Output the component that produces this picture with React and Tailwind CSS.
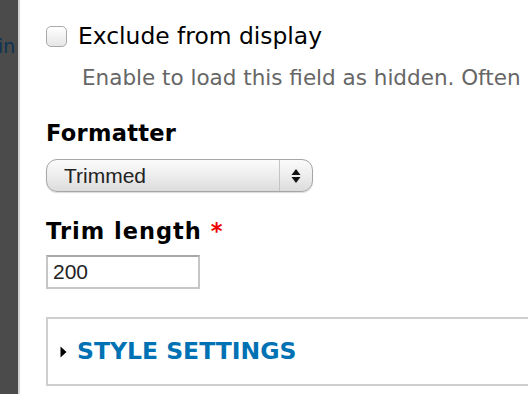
export default function App() {
  return (
    <div className="flex h-[394px] w-[528px] overflow-hidden bg-white font-['DejaVu_Sans',sans-serif]">
      {/* barra lateral escura */}
      <div className="relative w-[18px] shrink-0 overflow-hidden bg-[#4b4b4b]">
        <span className="absolute left-[-2px] top-[32px] text-[19px] text-[#0f3352]">in</span>
      </div>
      <div className="w-[2px] shrink-0 bg-[#d2d2d2]" />

      <div className="min-w-0 flex-1 pl-[26px] pt-[26px]">
        {/* Exclude from display */}
        <div className="flex items-center gap-[11px] whitespace-nowrap">
          <div className="h-[21px] w-[21px] shrink-0 rounded-[5px] border border-[#a9a9a9] bg-gradient-to-b from-white to-[#e6e6e6] shadow-[inset_0_1px_0_#fff]" />
          <span className="text-[23.4px] leading-[21px] text-black">Exclude from display</span>
        </div>
        <p className="mt-[21px] whitespace-nowrap pl-[36px] text-[21.5px] leading-[20px] text-[#666]">
          Enable to load this field as hidden. Often used to provide data for templates.
        </p>

        {/* Formatter */}
        <h3 className="mt-[33px] text-[22.5px] font-bold leading-[24px] tracking-[0.3px] text-black">Formatter</h3>
        <div className="mt-[14px] flex h-[33px] w-[267px] items-stretch rounded-[11px] border border-[#a6a6a6] bg-gradient-to-b from-[#fbfbfb] via-[#ededed] to-[#dcdcdc] shadow-[0_1px_1px_rgba(0,0,0,0.15)]">
          <span className="flex-1 pl-[17px] font-['Liberation_Sans',sans-serif] text-[21px] leading-[31px] text-[#222]">Trimmed</span>
          <div className="flex w-[33px] items-center justify-center border-l border-[#c4c4c4]">
            <svg width="10" height="16" viewBox="0 0 10 16">
              <path d="M5 1 L9.5 7 L0.5 7 Z" fill="#111" />
              <path d="M5 15 L9.5 9 L0.5 9 Z" fill="#111" />
            </svg>
          </div>
        </div>

        {/* Trim length */}
        <h3 className="mt-[27px] text-[22.5px] font-bold leading-[24px] tracking-[1px] text-black">
          Trim length <span className="text-[#e00]">*</span>
        </h3>
        <div className="mt-[12px] flex h-[34px] w-[154px] items-center border-2 border-[#c6c6c6] border-t-[#a8a8a8] bg-white pl-[5px]">
          <span className="font-['Liberation_Sans',sans-serif] text-[21px] text-[#222]">200</span>
        </div>

        {/* Style settings */}
        <div className="mt-[28px] flex h-[69px] items-center border-2 border-r-0 border-[#cfcfcf] pl-[12px]">
          <svg width="7" height="12" viewBox="0 0 7 12" className="mr-[10px]">
            <path d="M0.5 0.5 L6.5 6 L0.5 11.5 Z" fill="#000" />
          </svg>
          <span className="text-[23.5px] font-bold text-[#0071b3]">STYLE SETTINGS</span>
        </div>
      </div>
    </div>
  );
}
